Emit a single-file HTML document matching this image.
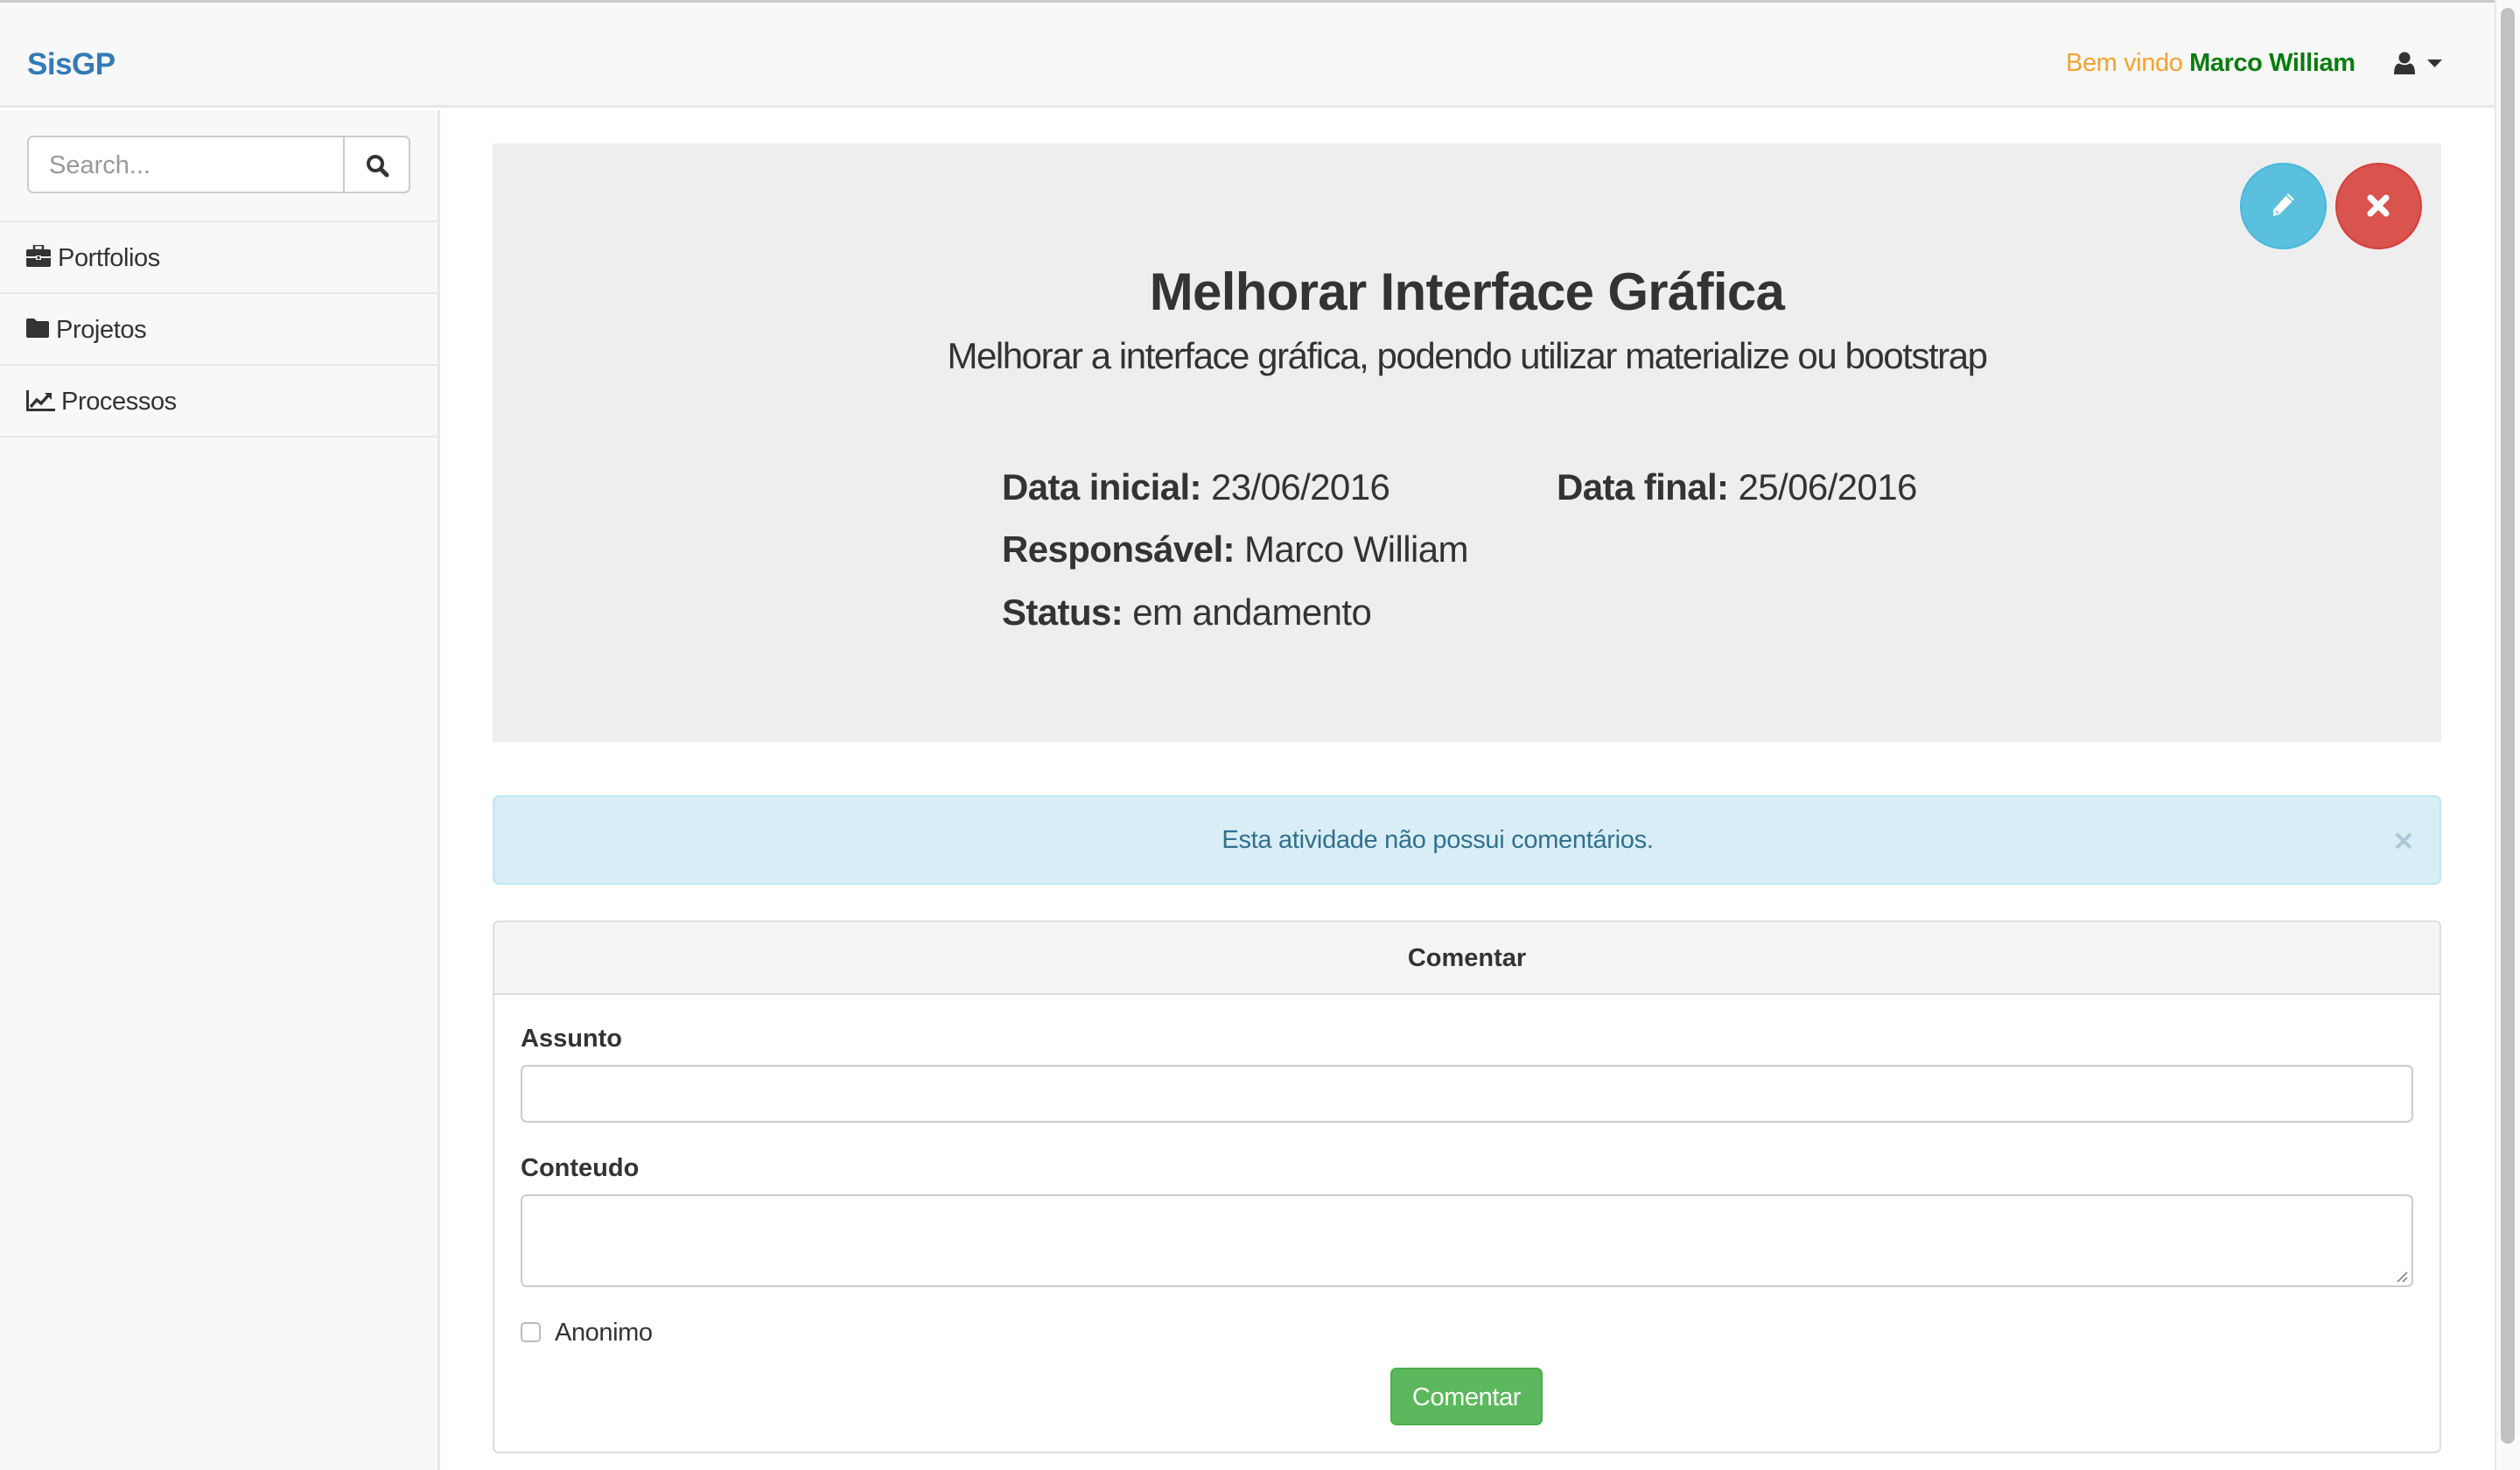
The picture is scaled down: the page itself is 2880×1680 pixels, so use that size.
<!DOCTYPE html>
<html><head><meta charset="utf-8"><style>
*{margin:0;padding:0;box-sizing:border-box}
html,body{width:2880px;height:1680px;overflow:hidden;background:#fff;font-family:"Liberation Sans",Arial,sans-serif;color:#333}
.a{position:absolute;white-space:nowrap}
.t29{font-size:29px;line-height:29px}
.t42{font-size:42px;line-height:42px;letter-spacing:-0.6px}
</style></head><body>
<div class="a" style="left:0;top:0;width:2880px;height:3px;background:#c9c9c9"></div>
<div class="a" style="left:0;top:3px;width:2851px;height:120px;background:#f8f8f8;border-bottom:3px solid #e7e7e7"></div>
<div class="a" style="left:31px;top:56px;font-size:35px;line-height:35px;font-weight:bold;color:#337ab7;letter-spacing:-0.5px">SisGP</div>
<div class="a t29" style="left:2361px;top:58px;color:#f7a12c;letter-spacing:-0.4px">Bem vindo <b style="color:#0a7c0e">Marco William</b></div>
<svg class="a" style="left:2736px;top:59px" width="24" height="26" viewBox="0 0 24 26"><circle cx="12" cy="7" r="6.5" fill="#333"/><path d="M0 26 Q0 14 6 13.5 Q12 17 18 13.5 Q24 14 24 26Z" fill="#333"/></svg>
<svg class="a" style="left:2774px;top:68px" width="17" height="9" viewBox="0 0 17 9"><path d="M0 0H17L8.5 9Z" fill="#333"/></svg>
<div class="a" style="left:0;top:126px;width:503px;height:1554px;background:#f8f8f8;border-right:3px solid #e7e7e7"></div>
<div class="a" style="left:31px;top:155px;width:438px;height:66px;border:2px solid #ccc;border-radius:7px;background:#fff"></div>
<div class="a" style="left:392px;top:155px;width:2px;height:66px;background:#ccc"></div>
<div class="a t29" style="left:56px;top:175px;color:#999">Search...</div>
<svg class="a" style="left:418px;top:176px" width="27" height="27" viewBox="0 0 27 27"><circle cx="11" cy="11" r="8" fill="none" stroke="#333" stroke-width="4"/><path d="M17 17L24 24" stroke="#333" stroke-width="5" stroke-linecap="round"/></svg>
<div class="a" style="left:0;top:252px;width:501px;height:2px;background:#e7e7e7"></div>
<div class="a" style="left:0;top:334px;width:501px;height:2px;background:#e7e7e7"></div>
<div class="a" style="left:0;top:416px;width:501px;height:2px;background:#e7e7e7"></div>
<div class="a" style="left:0;top:498px;width:501px;height:2px;background:#e7e7e7"></div>
<svg class="a" style="left:30px;top:280px" width="28" height="25" viewBox="0 0 28 25"><rect x="9" y="0" width="10" height="6" rx="1" fill="none" stroke="#333" stroke-width="2.5"/><rect x="0" y="5" width="28" height="20" rx="2" fill="#333"/><rect x="0" y="13" width="28" height="2" fill="#f8f8f8"/><rect x="11" y="12" width="6" height="5" fill="#f8f8f8"/><rect x="12.5" y="13" width="3" height="3" fill="#333"/></svg>
<div class="a t29" style="left:66px;top:281px;letter-spacing:-0.4px">Portfolios</div>
<svg class="a" style="left:30px;top:364px" width="26" height="22" viewBox="0 0 26 22"><path d="M2 0H9L12 3H24Q26 3 26 5V20Q26 22 24 22H2Q0 22 0 20V2Q0 0 2 0Z" fill="#333"/></svg>
<div class="a t29" style="left:64px;top:363px;letter-spacing:-0.4px">Projetos</div>
<svg class="a" style="left:30px;top:446px" width="33" height="24" viewBox="0 0 33 24"><path d="M1.5 0V22.5H33" fill="none" stroke="#333" stroke-width="3"/><path d="M5 19L12 11L17 15L26 5" fill="none" stroke="#333" stroke-width="3.5"/><path d="M21 3H29V11Z" fill="#333"/></svg>
<div class="a t29" style="left:70px;top:445px;letter-spacing:-0.4px">Processos</div>
<div class="a" style="left:563px;top:164px;width:2227px;height:684px;background:#eee"></div>
<div class="a" style="left:2560px;top:186px;width:99px;height:99px;border-radius:50%;background:#5bc0de;border:2px solid #46b8da"></div>
<svg class="a" style="left:2594px;top:219px" width="30" height="32" viewBox="0 0 30 32"><path d="M21 2L28 9L11 26L4 28L4 21Z" fill="#fff"/><path d="M19 4L26 11" stroke="#5bc0de" stroke-width="1.5"/><path d="M7 22L10 25" stroke="#5bc0de" stroke-width="1.5"/></svg>
<div class="a" style="left:2669px;top:186px;width:99px;height:99px;border-radius:50%;background:#d9534f;border:2px solid #d43f3a"></div>
<svg class="a" style="left:2704px;top:221px" width="28" height="28" viewBox="0 0 28 28"><path d="M5 5L23 23M23 5L5 23" stroke="#fff" stroke-width="7" stroke-linecap="round"/></svg>
<div class="a" style="left:563px;width:2227px;top:304px;text-align:center;font-size:60px;line-height:60px;font-weight:bold;letter-spacing:-0.7px">Melhorar Interface Gráfica</div>
<div class="a" style="left:563px;width:2227px;top:386px;text-align:center;font-size:42px;line-height:42px;letter-spacing:-1.45px">Melhorar a interface gráfica, podendo utilizar materialize ou bootstrap</div>
<div class="a t42" style="left:1145px;top:536px"><b>Data inicial:</b> 23/06/2016</div>
<div class="a t42" style="left:1779px;top:536px"><b>Data final:</b> 25/06/2016</div>
<div class="a t42" style="left:1145px;top:607px"><b>Responsável:</b> Marco William</div>
<div class="a t42" style="left:1145px;top:679px"><b>Status:</b> em andamento</div>
<div class="a" style="left:563px;top:909px;width:2227px;height:102px;background:#d9edf7;border:2px solid #bce8f1;border-radius:7px"></div>
<div class="a t29" style="left:563px;width:2160px;top:946px;text-align:center;color:#31708f;letter-spacing:-0.3px">Esta atividade não possui comentários.</div>
<svg class="a" style="left:2737px;top:951px" width="20" height="20" viewBox="0 0 20 20"><path d="M2 2L18 18M18 2L2 18" stroke="#a8c9d6" stroke-width="4"/></svg>
<div class="a" style="left:563px;top:1052px;width:2227px;height:609px;border:2px solid #ddd;border-radius:7px;background:#fff;overflow:hidden"><div style="height:83px;background:#f5f5f5;border-bottom:2px solid #ddd"></div></div>
<div class="a t29" style="left:563px;width:2227px;top:1081px;text-align:center;font-weight:bold">Comentar</div>
<div class="a t29" style="left:595px;top:1173px;font-weight:bold">Assunto</div>
<div class="a" style="left:595px;top:1217px;width:2163px;height:66px;border:2px solid #ccc;border-radius:7px"></div>
<div class="a t29" style="left:595px;top:1321px;font-weight:bold">Conteudo</div>
<div class="a" style="left:595px;top:1365px;width:2163px;height:106px;border:2px solid #ccc;border-radius:7px"></div>
<svg class="a" style="left:2738px;top:1452px" width="14" height="14" viewBox="0 0 14 14"><path d="M2 13L13 2M8 13L13 8" stroke="#777" stroke-width="1.5"/></svg>
<div class="a" style="left:595px;top:1511px;width:23px;height:23px;border:2px solid #bbb;border-radius:5px;background:#fff"></div>
<div class="a t29" style="left:634px;top:1509px;letter-spacing:-0.4px">Anonimo</div>
<div class="a" style="left:1589px;top:1563px;width:174px;height:66px;background:#5cb85c;border:2px solid #4cae4c;border-radius:7px"></div>
<div class="a t29" style="left:1589px;width:174px;top:1583px;text-align:center;color:#fff;letter-spacing:-0.4px">Comentar</div>
<div class="a" style="left:2851px;top:0;width:29px;height:1680px;background:#fafafa;border-left:2px solid #e8e8e8"></div>
<div class="a" style="left:2858px;top:9px;width:16px;height:1641px;background:#c1c1c1;border-radius:8px"></div>
</body></html>
